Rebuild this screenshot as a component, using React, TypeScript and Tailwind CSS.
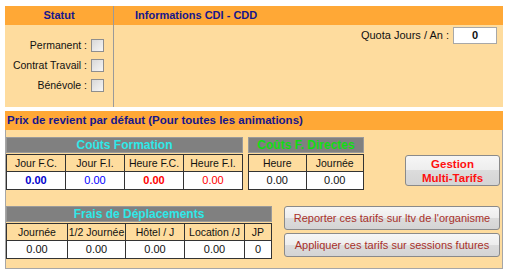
import React from "react";

const navy = "text-[#16168c]";

const Checkbox = () => (
  <span className="inline-block w-[13px] h-[13px] border border-[#8e8e8e] bg-[linear-gradient(135deg,#d8d8d8,#f6f6f6)] ml-[4px]" />
);

const Btn = ({ children, className }: { children: React.ReactNode; className: string }) => (
  <div
    className={
      "rounded-[3px] border border-[#8a8a8a] bg-[linear-gradient(#f6f6f6_0%,#ededed_50%,#dcdcdc_50%,#d4d4d4_100%)] flex flex-col items-center justify-center whitespace-nowrap " +
      className
    }
  >
    {children}
  </div>
);

const Title = ({ label, color, w }: { label: string; color: string; w: string }) => (
  <div
    className={
      "h-[16px] bg-[#808080] border border-[#9a9a9a] flex items-center justify-center font-bold text-[12px] " +
      color +
      " " +
      w
    }
  >
    {label}
  </div>
);

const App = () => {
  const formation = [
    { h: "Jour F.C.", v: "0.00", c: "text-[#0000cc] font-bold" },
    { h: "Jour F.I.", v: "0.00", c: "text-[#0000ff]" },
    { h: "Heure F.C.", v: "0.00", c: "text-[#ff0000] font-bold" },
    { h: "Heure F.I.", v: "0.00", c: "text-[#ff0000]" },
  ];
  const frais = [
    { h: "Journée", v: "0.00", w: "w-[61px]" },
    { h: "1/2 Journée", v: "0.00", w: "w-[58px]" },
    { h: "Hôtel / J", v: "0.00", w: "w-[59px]" },
    { h: "Location /J", v: "0.00", w: "w-[60px]" },
    { h: "JP", v: "0", w: "w-[27px]" },
  ];
  const th = "border border-[#333] text-center leading-[14px] whitespace-nowrap text-[10.5px]";
  const td = "border border-[#333] text-center leading-[15px] whitespace-nowrap";

  return (
    <div className="w-[511px] h-[272px] bg-white font-['Liberation_Sans',Arial,sans-serif] text-[11px] text-[#111] pt-[6px] pl-[5px]">
      {/* statut / infos CDI */}
      <div className="w-[498px] flex">
        <div className="w-[108px] flex flex-col">
          <div className={"h-[19px] bg-[#ffa836] flex items-center justify-center font-bold text-[11px] " + navy}>
            Statut
          </div>
          <div className="h-[82px] bg-[#fedc9e] pt-[14px] pr-[9px] flex flex-col items-end text-[10.5px]">
            {["Permanent :", "Contrat Travail :", "Bénévole :"].map((l) => (
              <div key={l} className="h-[20px] flex items-start">
                <span className="leading-[13px]">{l}</span>
                <Checkbox />
              </div>
            ))}
          </div>
        </div>
        <div className="w-px bg-[#9a9a9a]" />
        <div className="flex-1 flex flex-col">
          <div className={"h-[19px] bg-[#ffa836] flex items-center pl-[21px] font-bold text-[11px] " + navy}>
            Informations CDI - CDD
          </div>
          <div className="h-[82px] bg-[#fedc9e] pt-[2px] pr-[6px] flex justify-end items-start">
            <span className="leading-[17px] mr-[4px]">Quota Jours / An :</span>
            <div className="w-[44px] h-[17px] bg-white border border-[#a8a8a8] flex items-center justify-center font-bold">
              0
            </div>
          </div>
        </div>
      </div>

      {/* prix de revient */}
      <div className="w-[498px] mt-[4px]">
        <div className={"h-[19px] bg-[#ffa836] flex items-center pl-[2px] font-bold text-[11.5px] " + navy}>
          Prix de revient par défaut (Pour toutes les animations)
        </div>
        <div className="bg-[#fedc9e] border-x border-b border-[#a6a6a6] pt-[7px] pb-[9px]">
          <div className="flex items-start">
            <div className="w-[237px]">
              <Title label="Coûts Formation" color="text-[#2ee8e8]" w="w-[237px]" />
              <table className="mt-[1px] table-fixed w-[237px] border-collapse">
                <tbody>
                  <tr className="h-[17px]">
                    {formation.map((f) => (
                      <td key={f.h} className={th}>
                        {f.h}
                      </td>
                    ))}
                  </tr>
                  <tr className="h-[18px] bg-white">
                    {formation.map((f) => (
                      <td key={f.h} className={td + " " + f.c}>
                        {f.v}
                      </td>
                    ))}
                  </tr>
                </tbody>
              </table>
            </div>
            <div className="w-[116px] ml-[5px]">
              <Title label="Coûts F. Directes" color="text-[#11dd11]" w="w-[116px]" />
              <table className="mt-[1px] table-fixed w-[116px] border-collapse">
                <tbody>
                  <tr className="h-[17px]">
                    <td className={th}>Heure</td>
                    <td className={th}>Journée</td>
                  </tr>
                  <tr className="h-[18px] bg-white">
                    <td className={td}>0.00</td>
                    <td className={td}>0.00</td>
                  </tr>
                </tbody>
              </table>
            </div>
            <Btn className="ml-[41px] mt-[18px] w-[95px] h-[31px] text-[#ff1010] font-bold text-[11.5px] leading-[14px]">
              <span>Gestion</span>
              <span>Multi-Tarifs</span>
            </Btn>
          </div>

          <div className="flex items-start mt-[16px]">
            <div className="w-[266px]">
              <Title label="Frais de Déplacements" color="text-[#2ee8e8]" w="w-[266px]" />
              <table className="mt-[1px] table-fixed w-[265px] border-collapse">
                <tbody>
                  <tr className="h-[17px]">
                    {frais.map((f) => (
                      <td key={f.h} className={th + " " + f.w}>
                        {f.h}
                      </td>
                    ))}
                  </tr>
                  <tr className="h-[18px] bg-white">
                    {frais.map((f) => (
                      <td key={f.h} className={td}>
                        {f.v}
                      </td>
                    ))}
                  </tr>
                </tbody>
              </table>
            </div>
            <div className="ml-[12px] flex flex-col gap-[3px] text-[#a8302a]">
              <Btn className="w-[216px] h-[24px]">Reporter ces tarifs sur ltv de l'organisme</Btn>
              <Btn className="w-[216px] h-[24px]">Appliquer ces tarifs sur sessions futures</Btn>
            </div>
          </div>
        </div>
      </div>
    </div>
  );
};

export default App;
